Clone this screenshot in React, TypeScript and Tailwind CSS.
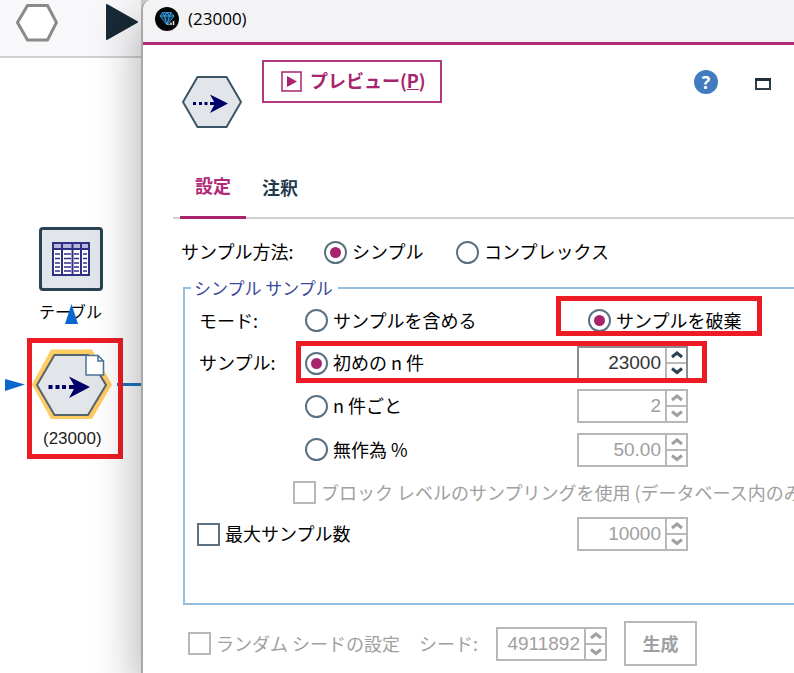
import clsx from 'clsx';
import React from 'react';

interface SpinnerProps {
	id: string;
	label: string;
	value: string;
	disabled?: boolean;
}

interface ChoiceProps {
	type: 'radio' | 'checkbox';
	name: string;
	label: string;
	checked?: boolean;
	disabled?: boolean;
}

const Choice = ({ type, name, label, checked, disabled }: ChoiceProps) => (
	<label
		className={clsx(
			'flex shrink-0 items-center gap-[5px]',
			disabled ? 'text-[#a0a0a0]' : 'text-black'
		)}>
		<input
			type={type}
			name={name}
			defaultChecked={checked}
			disabled={disabled}
			className={clsx(
				'grid size-[23px] shrink-0 appearance-none place-items-center border-2 bg-white before:size-[11px] before:content-[""] checked:before:bg-[#a8246d]',
				type === 'radio' && 'rounded-full before:rounded-full',
				disabled ? 'border-[#b8b8b8]' : 'border-[#5b7182]'
			)}
		/>
		<span className="pb-[2px]">{label}</span>
	</label>
);

const Chevron = ({ down }: { down?: boolean }) => (
	<svg viewBox="0 0 12 8" className="h-2 w-3" fill="none">
		<path
			d={down ? 'M1 1.5 6 5.5 11 1.5' : 'M1 6 6 2 11 6'}
			stroke="currentColor"
			strokeWidth="3"
		/>
	</svg>
);

const Spinner = ({ id, label, value, disabled }: SpinnerProps) => (
	<div
		className={clsx(
			'flex h-[34px] w-[111px] shrink-0 border-2 bg-white',
			disabled ? 'border-[#b8b8b8]' : 'border-[#8c8c8c]'
		)}>
		<input
			id={id}
			aria-label={label}
			defaultValue={value}
			disabled={disabled}
			className={clsx(
				'w-0 flex-1 pr-1 text-right font-["Liberation_Sans",sans-serif] text-[19px]',
				disabled ? 'text-[#a0a0a0]' : 'text-[#333]'
			)}
		/>
		<div
			className={clsx(
				'flex w-[21px] flex-col border-l-2 border-[#b8b8b8]',
				disabled ? 'text-[#a0a0a0]' : 'text-[#2b4252]'
			)}>
			<button
				type="button"
				aria-label="+"
				disabled={disabled}
				className="flex flex-1 items-center justify-center border-b-2 border-[#b8b8b8]">
				<Chevron />
			</button>
			<button
				type="button"
				aria-label="-"
				disabled={disabled}
				className="flex flex-1 items-center justify-center">
				<Chevron down />
			</button>
		</div>
	</div>
);

const SampleIcon = () => (
	<svg viewBox="0 0 60 54" className="h-[54px] w-[60px]">
		<path
			d="M15.5 2h29L59 27 44.500 52h-29L1 27Z"
			fill="#e2e6ea"
			stroke="#3c5566"
			strokeWidth="2"
		/>
		<path
			d="M11 27h3v3h-3zM17 27h3v3h-3zM22.500 27h3v3h-3zM28 27h6v3h-6z"
			fill="#00006b"
		/>
		<path d="M28 19.500 46 28.500 28 38 33 28.500Z" fill="#00006b" />
	</svg>
);

const TableIcon = () => (
	<svg viewBox="0 0 38 34" className="h-[34px] w-[38px]">
		<rect x="1" y="1" width="36" height="32" fill="#fff" />
		<rect x="1" y="1" width="36" height="6" fill="#b9b6dc" />
		<path
			d="M3 12h5M3 16.500h5M3 21h5M3 25h5M3 29h5M12 12h7M12 16.500h7M12 21h7M12 25h7M12 29h7M22 12h5M22 16.500h5M22 21h5M22 25h5M22 29h5M31 12h4M31 16.500h4M31 21h4M31 25h4M31 29h4"
			stroke="#302f86"
			strokeWidth="1.500"
		/>
		<path
			d="M1 1h36v32H1ZM1 7h36M10 1v32M20.500 1v32M29 1v32"
			fill="none"
			stroke="#302f86"
			strokeWidth="2"
		/>
	</svg>
);

const StreamCanvas = () => (
	<div className="relative flex-1 bg-white">
		<div className="absolute top-[169px] left-[39px] flex size-16 items-center justify-center rounded-[4px] border-3 border-[#2a4353] bg-[#e2e6ea]">
			<TableIcon />
		</div>
		<p className="absolute top-[241px] left-[39px] text-[16px] leading-6">
			テーブル
		</p>
		<svg
			viewBox="0 0 142 140"
			className="absolute top-[242px] left-0 h-[140px] w-[142px]">
			<path d="M71.500 4 78 24h-13Z" fill="#0a66cc" />
			<path d="M5 79 25 84.500 5 91Z" fill="#0a66cc" />
			<path d="M117 84.500h25" stroke="#1f74c4" strokeWidth="3" />
			<path d="M51 49.500h41L112 84.500 92 119H51L32 84.500Z" fill="#ffcb63" />
			<path
				d="M54.500 55H88L106 85 88 115H54.500L37 85Z"
				fill="#e2e6ea"
				stroke="#56656c"
				strokeWidth="2"
			/>
			<path
				d="M48.500 85h4v4h-4zM55.500 85h4v4h-4zM62 85h4v4h-4zM69 85h7v4h-7z"
				fill="#00006b"
			/>
			<path d="M69 76.500 90 87 69 98 75 87Z" fill="#00006b" />
			<path
				d="M86 55.500h12L103.500 61V75H86ZM98 55.500V61h5.500"
				fill="#fff"
				stroke="#4d7396"
				strokeWidth="1.500"
			/>
		</svg>
		<p className="absolute top-[369px] left-[43px] font-['Liberation_Sans',sans-serif] text-[17px] leading-6 text-[#222]">
			(23000)
		</p>
		<div className="absolute top-[280px] left-[27px] h-[121px] w-[96px] border-5 border-[#ed1c24]" />
	</div>
);

const App = () => {
	return (
		<div className="flex min-h-screen overflow-hidden bg-[#cfcfcf] font-['Noto_Sans_CJK_JP',sans-serif] text-[18px] leading-6 whitespace-nowrap text-black">
			<aside className="flex w-[141px] shrink-0 flex-col">
				<div className="flex h-[58px] items-start gap-[47px] border-b-2 border-[#d0d0d2] bg-[#f8f8fa] pt-1 pl-4">
					<svg viewBox="0 0 42 38" className="h-[38px] w-[42px] shrink-0">
						<path
							d="M11.500 1.500h20L40.500 18.500 31.500 36h-20L1.500 18.500Z"
							fill="#fff"
							stroke="#8a8a8a"
							strokeWidth="3"
						/>
					</svg>
					<svg viewBox="0 0 34 38" className="h-[38px] w-[34px] shrink-0">
						<path
							d="M2 1 32 18 2 35Z"
							fill="#182a36"
							stroke="#182a36"
							strokeWidth="2"
							strokeLinejoin="round"
						/>
					</svg>
				</div>
				<StreamCanvas />
			</aside>

			<main className="relative min-w-0 flex-1 overflow-hidden rounded-tl-[10px] border-l-2 border-[#a8a8a8] bg-white shadow-[0_20px_50px_rgba(0,0,0,0.35)]">
				<header className="flex h-[45px] items-center gap-[9px] border-b-3 border-[#b02a78] bg-[#f3f2f5] pb-1 pl-3">
					<svg viewBox="0 0 24 24" className="size-6">
						<circle cx="12" cy="12" r="12" fill="#050505" />
						<path
							d="M7.500 5.500h8.500L19 9l-7 9-7-9Z"
							fill="#0d3350"
							stroke="#2d8fd0"
							strokeWidth="1"
						/>
						<path
							d="M5 9h14M7.500 5.500 9.500 9l2.500 9 2.500-9L16 5.500M9.500 9 12 5.500 14.500 9"
							fill="none"
							stroke="#3ea4e0"
							strokeWidth="1"
						/>
						<path
							d="M13.500 17.500h1M16 15.500v2.500M18.500 14v4"
							stroke="#e8e8e8"
							strokeWidth="1.500"
						/>
					</svg>
					<h1 className="font-['Open_Sans',sans-serif] text-[17px]">(23000)</h1>
				</header>

				<div className="flex items-start pt-[15px] pr-[23px] pl-[39px]">
					<div className="pt-[15px]">
						<SampleIcon />
					</div>
					<button
						type="button"
						className="ml-5 flex h-[43px] w-[180px] items-center gap-2 border-2 border-[#b0387f] pl-[17px] font-bold text-[#a8246d]">
						<svg viewBox="0 0 21 21" className="size-[21px]">
							<path
								d="M1 1h19v19H1Z"
								fill="none"
								stroke="currentColor"
								strokeWidth="1.500"
							/>
							<path d="M6 5 16 10.500 6 16Z" fill="currentColor" />
						</svg>
						<span className="pb-1">
							プレビュー(<u>P</u>)
						</span>
					</button>
					<div className="ml-auto flex h-[43px] items-center gap-[37px]">
						<button
							type="button"
							className="size-6 rounded-full bg-[#427bc0] font-['Open_Sans',sans-serif] font-bold text-white">
							?
						</button>
						<button type="button" aria-label="最大化" className="pt-1">
							<svg viewBox="0 0 16 12" className="h-3 w-4">
								<path
									d="M1 1h14v10H1Z"
									fill="#fff"
									stroke="#2b3f4d"
									strokeWidth="2"
								/>
								<path d="M0 0h16v3H0Z" fill="#1d303d" />
							</svg>
						</button>
					</div>
				</div>

				<nav className="mt-10 ml-[30px] flex h-[50px] border-b-2 border-[#d0d0d0] pl-[7px] font-bold">
					<button
						type="button"
						className="-mb-[2px] h-[50px] w-[66px] border-b-3 border-[#a8246d] pb-4 text-[#b02a78]">
						設定
					</button>
					<button
						type="button"
						className="h-[50px] w-[68px] pb-[14px] text-[#24394a]">
						注釈
					</button>
				</nav>

				<form>
					<div className="flex h-[58px] items-center pt-2 pl-[38px]">
						<span className="w-[143px] pb-[2px]">サンプル方法:</span>
						<div className="w-[132px]">
							<Choice type="radio" name="method" label="シンプル" checked />
						</div>
						<Choice type="radio" name="method" label="コンプレックス" />
					</div>

					<fieldset className="ml-10 min-w-0 border-2 border-r-0 border-[#94bfe0] pb-[49px]">
						<legend className="ml-[6px] pr-[5px] pl-[3px] text-[17px] leading-[22px] text-[#3a479c]">
							シンプル サンプル
						</legend>

						<div className="flex h-[43px] items-center pl-[14px]">
							<span className="w-[106px] shrink-0 pb-[2px]">モード:</span>
							<div className="w-[283px] shrink-0">
								<Choice type="radio" name="mode" label="サンプルを含める" />
							</div>
							<div className="relative">
								<Choice
									type="radio"
									name="mode"
									label="サンプルを破棄"
									checked
								/>
								<div className="pointer-events-none absolute -top-3 -left-8 h-10 w-[206px] border-5 border-[#ed1c24]" />
							</div>
						</div>

						<div className="relative flex h-[42px] items-center pl-[14px]">
							<span className="w-[106px] shrink-0 pb-[2px]">サンプル:</span>
							<div className="w-[272px] shrink-0">
								<Choice type="radio" name="sample" label="初めの n 件" checked />
							</div>
							<Spinner id="first" label="初めの n 件" value="23000" />
							<div className="pointer-events-none absolute -top-px left-[111px] h-[42px] w-[411px] border-5 border-[#ed1c24]" />
						</div>

						<div className="flex h-[44px] items-center pl-[120px]">
							<div className="w-[272px] shrink-0">
								<Choice type="radio" name="sample" label="n 件ごと" />
							</div>
							<Spinner id="every" label="n 件ごと" value="2" disabled />
						</div>

						<div className="flex h-[43px] items-center pl-[120px]">
							<div className="w-[272px] shrink-0">
								<Choice type="radio" name="sample" label="無作為 %" />
							</div>
							<Spinner id="random" label="無作為 %" value="50.00" disabled />
						</div>

						<div className="flex h-[43px] items-center overflow-hidden pl-[108px]">
							<Choice
								type="checkbox"
								name="block"
								label="ブロック レベルのサンプリングを使用 (データベース内のみ"
								disabled
							/>
						</div>

						<div className="flex h-10 items-center pl-3">
							<div className="w-[380px] shrink-0">
								<Choice type="checkbox" name="max" label="最大サンプル数" />
							</div>
							<Spinner id="max" label="最大サンプル数" value="10000" disabled />
						</div>
					</fieldset>

					<div className="flex items-center pt-4 pb-[7px] pl-[45px] text-[#a0a0a0]">
						<div className="w-[231px] shrink-0">
							<Choice
								type="checkbox"
								name="useSeed"
								label="ランダム シードの設定"
								disabled
							/>
						</div>
						<label htmlFor="seed" className="w-[77px] shrink-0 pb-[2px]">
							シード:
						</label>
						<Spinner id="seed" label="シード" value="4911892" disabled />
						<button
							type="button"
							disabled
							className="ml-[17px] h-[45px] w-[73px] shrink-0 border-2 border-[#b8b8b8] pb-[2px] font-bold">
							生成
						</button>
					</div>
				</form>
			</main>
		</div>
	);
};

export default App;
